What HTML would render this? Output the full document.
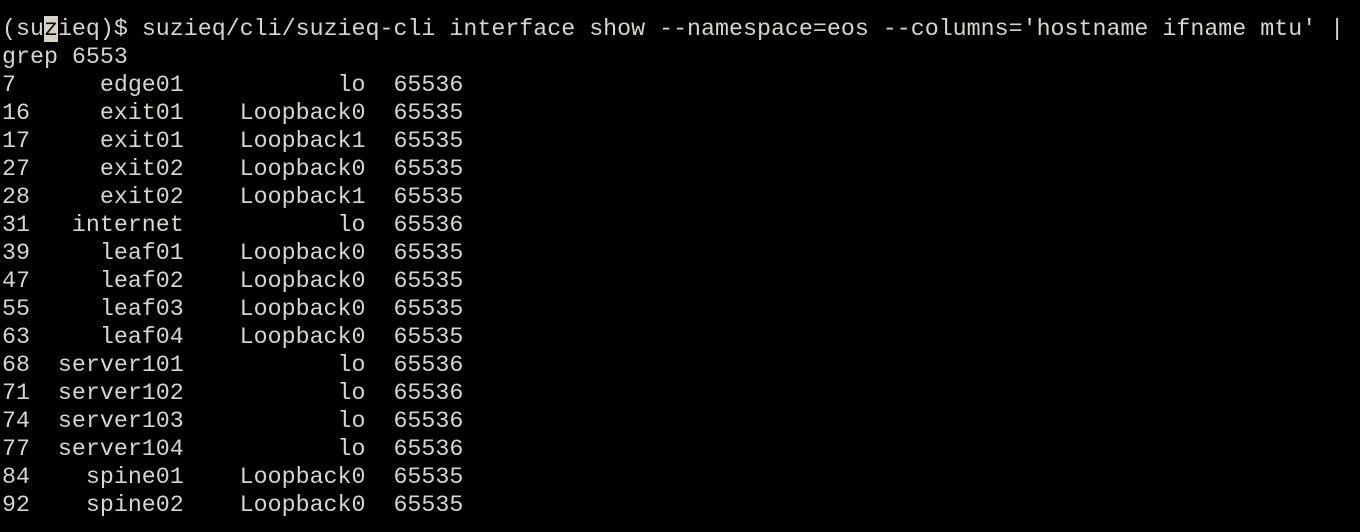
<!DOCTYPE html>
<html><head><style>
html,body{margin:0;padding:0;background:#000;width:1360px;height:532px;overflow:hidden}
pre{margin:0;position:absolute;left:2px;top:15px;font-family:"Liberation Mono","DejaVu Sans Mono",monospace;font-size:23.3px;line-height:28px;color:#d3d7cf;letter-spacing:0}
.c{background:#d6d3c6;color:#000}
</style></head><body><pre>(su<span class="c">z</span>ieq)$ suzieq/cli/suzieq-cli interface show --namespace=eos --columns='hostname ifname mtu' |
grep 6553
7      edge01           lo  65536
16     exit01    Loopback0  65535
17     exit01    Loopback1  65535
27     exit02    Loopback0  65535
28     exit02    Loopback1  65535
31   internet           lo  65536
39     leaf01    Loopback0  65535
47     leaf02    Loopback0  65535
55     leaf03    Loopback0  65535
63     leaf04    Loopback0  65535
68  server101           lo  65536
71  server102           lo  65536
74  server103           lo  65536
77  server104           lo  65536
84    spine01    Loopback0  65535
92    spine02    Loopback0  65535</pre></body></html>
